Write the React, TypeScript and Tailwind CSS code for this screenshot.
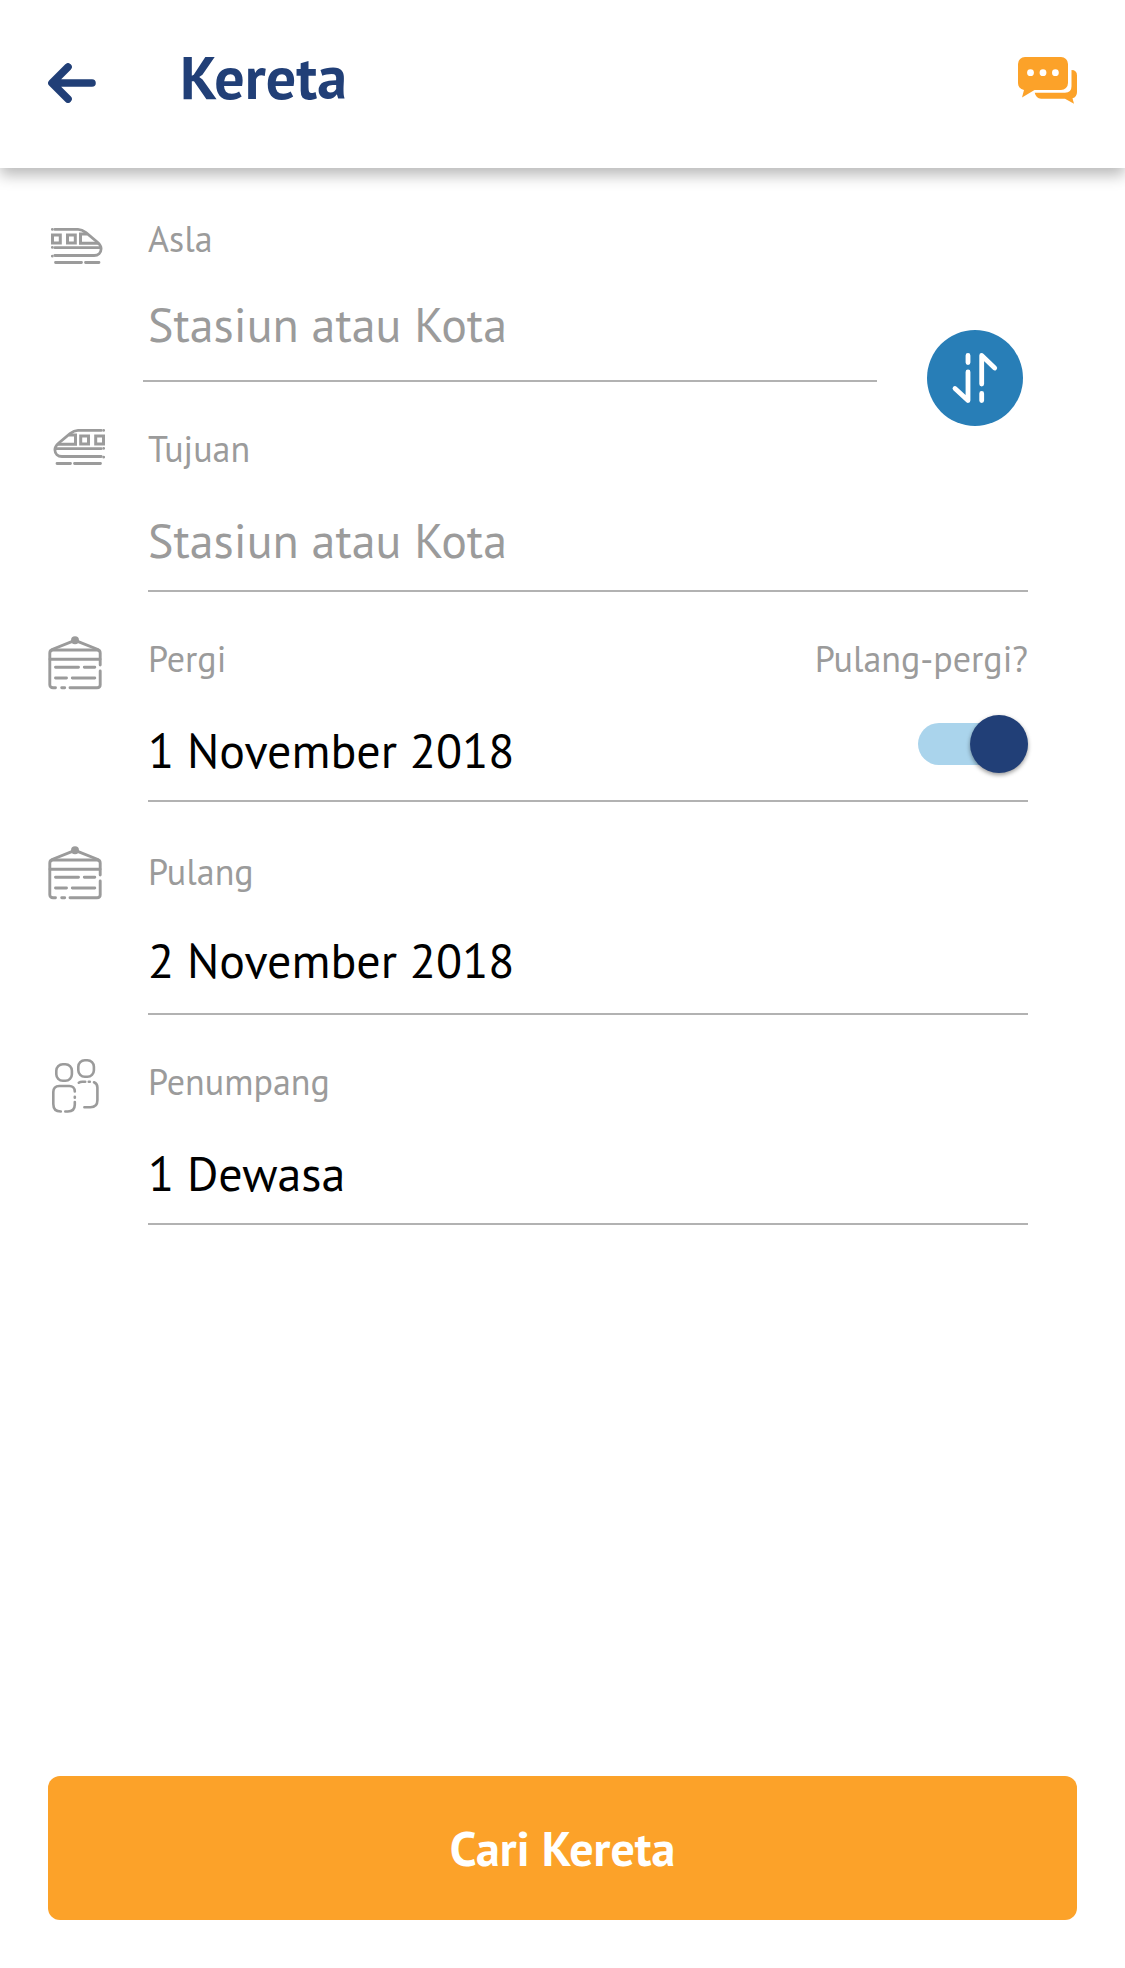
import { useState, type ReactNode } from "react";

const labelText = "text-4xl leading-[44px] text-[#9b9b9b]";
const valueText = "h-[60px] w-full bg-transparent text-left text-5xl leading-[60px] outline-none";
const underline = "border-b-2 border-[#b2b2b2]";

function ArrowIcon() {
  return (
    <svg width="48" height="40" viewBox="0 0 48 40" fill="none" stroke="currentColor" strokeWidth="7.6" strokeLinecap="round" strokeLinejoin="round" aria-hidden="true">
      <path d="M20 4 4 20l16 16M6 20h38" />
    </svg>
  );
}

function ChatIcon() {
  return (
    <svg width="59" height="47" viewBox="0 0 59 47" aria-hidden="true">
      <path fill="#fca229" d="M7 0h36a7 7 0 0 1 7 7v19a7 7 0 0 1-7 7H16.500L4 40.500 6 33C2 32 0 29.500 0 26V7a7 7 0 0 1 7-7Z" />
      <path fill="#fca229" d="M53.500 13q5.500 0 5.500 5.500V35q0 5-4.500 6.300L56 46.700l-9-5H23q-5-.5-6.300-6H47q6.500 0 6.500-6.500Z" />
      <g fill="#fff">
        <circle cx="12.500" cy="15.700" r="3.400" />
        <circle cx="25" cy="15.700" r="3.400" />
        <circle cx="37.400" cy="15.700" r="3.400" />
      </g>
    </svg>
  );
}

function TrainIcon({ flipped = false }: { flipped?: boolean }) {
  return (
    <svg width="52" height="36" viewBox="0 0 52 36" fill="none" stroke="#9b9b9b" strokeWidth="2.8" strokeLinecap="round" aria-hidden="true">
      <g transform={flipped ? "translate(52 0) scale(-1 1)" : undefined}>
        <path d="M3.800 1.400H27c3.500 0 5.500 1.200 8 3.200l11.500 9.600c2.600 2.200 3.600 4 3.600 6.600 0 4-3 6.700-7 6.700H3.800M3.800 19.700H49" />
        <path d="M1.300 1.400h.01M1.300 19.400h.01M1.300 28.200h.01" />
        <path d="M4.500 34.500h26M34.500 34.500h13.500" />
        <path d="M1.500 7h7.800v8H1.500ZM16.500 7h7.800v8h-7.800ZM47 15.200H29.500V6H36" strokeLinecap="butt" strokeWidth="3" />
      </g>
    </svg>
  );
}

function CalendarIcon() {
  return (
    <svg width="54" height="54" viewBox="0 0 54 54" fill="none" stroke="#9b9b9b" strokeWidth="2.9" strokeLinecap="round" aria-hidden="true">
      <circle cx="27" cy="4.300" r="4" fill="#9b9b9b" stroke="none" />
      <path d="M4 13.500 27 4.300l23 9.200" />
      <path d="M7.500 51.700H5c-2 0-3.200-1.200-3.200-3V17c0-2 1.200-3 3.200-3h44c2 0 3.200 1 3.200 3v12" />
      <path d="M52.200 35v13.700c0 1.800-1.200 3-3.200 3H22M13.700 51.700h3M2 23.300h50" />
      <path d="M7.500 31.300h23M36.300 31.300h10.500M7.500 42h11M24.300 42h22.500" />
    </svg>
  );
}

function PeopleIcon() {
  return (
    <svg width="47" height="54" viewBox="0 0 47 54" fill="none" stroke="#9b9b9b" strokeWidth="2.600" strokeLinecap="round" aria-hidden="true">
      <rect x="4.300" y="5.300" width="15.600" height="16.500" rx="6.500" />
      <rect x="26.300" y="1.300" width="15.600" height="16.500" rx="6.500" />
      <path d="M22.800 32.500c0-3.500-2.300-5.500-5.500-5.500h-10c-4 0-6 2.300-6 6v12c0 5 2.500 7.500 7.500 7.500" />
      <path d="M13.300 52.500h2.500c4.500 0 7-2.500 7-7V43M22.800 37.700v1" />
      <path d="M26.800 23.700c1-.7 2-.9 3.500-.9h2.900M36.800 22.800h1M42 23.300c2.200.9 3.400 2.600 3.400 5.200v12.800c0 4.500-2.500 7-7 7h-6" />
    </svg>
  );
}

function SwapIcon() {
  return (
    <svg width="96" height="96" viewBox="0 0 96 96" fill="none" stroke="#fff" strokeWidth="4.800" strokeLinecap="round" strokeLinejoin="round" aria-hidden="true">
      <path d="M41 25.500v7M41 42v28.500L28 58.500" />
      <path d="M54.700 70.500v-7M54.700 54V25.500L67.700 38" />
    </svg>
  );
}

function Row({ icon, children }: { icon: ReactNode; children: ReactNode }) {
  return (
    <div className="flex items-start">
      <div className="flex w-[100px] shrink-0">{icon}</div>
      <div className="min-w-0 flex-1 pt-px">{children}</div>
    </div>
  );
}

export default function App() {
  const [origin, setOrigin] = useState("");
  const [destination, setDestination] = useState("");
  const [roundTrip, setRoundTrip] = useState(true);

  const swap = () => {
    setOrigin(destination);
    setDestination(origin);
  };

  return (
    <div className="flex min-h-screen flex-col bg-white font-['PT_Sans','Noto_Sans',sans-serif] text-black">
      <header className="flex h-[168px] items-center justify-between px-12 shadow-[0_7px_14px_rgba(0,0,0,0.28)]">
        <div className="flex items-center gap-[84px] text-[#213f77]">
          <button type="button" aria-label="Kembali" className="pb-[2px]">
            <ArrowIcon />
          </button>
          <h1 className="pb-[14px] text-6xl leading-[72px] font-bold">Kereta</h1>
        </div>
        <button type="button" aria-label="Obrolan" className="pb-2">
          <ChatIcon />
        </button>
      </header>

      <form className="flex flex-1 flex-col" onSubmit={(e) => e.preventDefault()}>
        <div className="flex flex-col gap-11 pt-12 pr-[97px] pl-12">
          <Row icon={<div className="pt-3 pl-[3px]"><TrainIcon /></div>}>
            <label htmlFor="asal" className={`block ${labelText}`}>Asla</label>
            <div className="-ml-[5px] flex items-end gap-[50px] pr-[5px]">
              <div className={`min-w-0 flex-1 pt-[33px] pb-[26px] pl-[5px] ${underline}`}>
                <input id="asal" type="text" value={origin} onChange={(e) => setOrigin(e.target.value)} placeholder="Stasiun atau Kota" className={`block placeholder:text-[#9b9b9b] ${valueText}`} />
              </div>
              <button type="button" aria-label="Tukar asal dan tujuan" onClick={swap} className="-mb-11 shrink-0 rounded-full bg-[#287eb7]">
                <SwapIcon />
              </button>
            </div>
          </Row>

          <Row icon={<div className="pt-[3px] pl-[5px]"><TrainIcon flipped /></div>}>
            <label htmlFor="tujuan" className={`block ${labelText}`}>Tujuan</label>
            <div className={`pt-[39px] pb-5 ${underline}`}>
              <input id="tujuan" type="text" value={destination} onChange={(e) => setDestination(e.target.value)} placeholder="Stasiun atau Kota" className={`block placeholder:text-[#9b9b9b] ${valueText}`} />
            </div>
          </Row>

          <Row icon={<CalendarIcon />}>
            <div className="flex justify-between">
              <span id="pergi" className={labelText}>Pergi</span>
              <label htmlFor="pulang-pergi" className={labelText}>Pulang-pergi?</label>
            </div>
            <div className={`flex items-center pt-[39px] pb-5 ${underline}`}>
              <button type="button" aria-describedby="pergi" className={valueText}>1 November 2018</button>
              <input
                id="pulang-pergi"
                type="checkbox"
                role="switch"
                checked={roundTrip}
                onChange={(e) => setRoundTrip(e.target.checked)}
                className="relative -mt-3 h-[58px] w-[110px] shrink-0 appearance-none before:absolute before:inset-x-0 before:top-2 before:h-[42px] before:rounded-full before:bg-[#aad4ec] after:absolute after:top-0 after:left-0 after:size-[58px] after:rounded-full after:bg-[#213f77] after:shadow-[0_2px_4px_rgba(0,0,0,0.4)] checked:after:right-0 checked:after:left-auto"
              />
            </div>
          </Row>

          <Row icon={<CalendarIcon />}>
            <span id="pulang" className={`block pt-[3px] ${labelText}`}>Pulang</span>
            <div className={`pt-9 pb-[23px] ${underline}`}>
              <button type="button" aria-describedby="pulang" className={`block ${valueText}`}>2 November 2018</button>
            </div>
          </Row>

          <Row icon={<div className="pl-1"><PeopleIcon /></div>}>
            <span id="penumpang" className={`block ${labelText}`}>Penumpang</span>
            <div className={`pt-[39px] pb-5 ${underline}`}>
              <button type="button" aria-describedby="penumpang" className={`block ${valueText}`}>1 Dewasa</button>
            </div>
          </Row>
        </div>

        <div className="mt-auto p-12">
          <button type="submit" className="h-36 w-full rounded-xl bg-[#fca229] text-5xl leading-[60px] font-bold text-white">
            Cari Kereta
          </button>
        </div>
      </form>
    </div>
  );
}
